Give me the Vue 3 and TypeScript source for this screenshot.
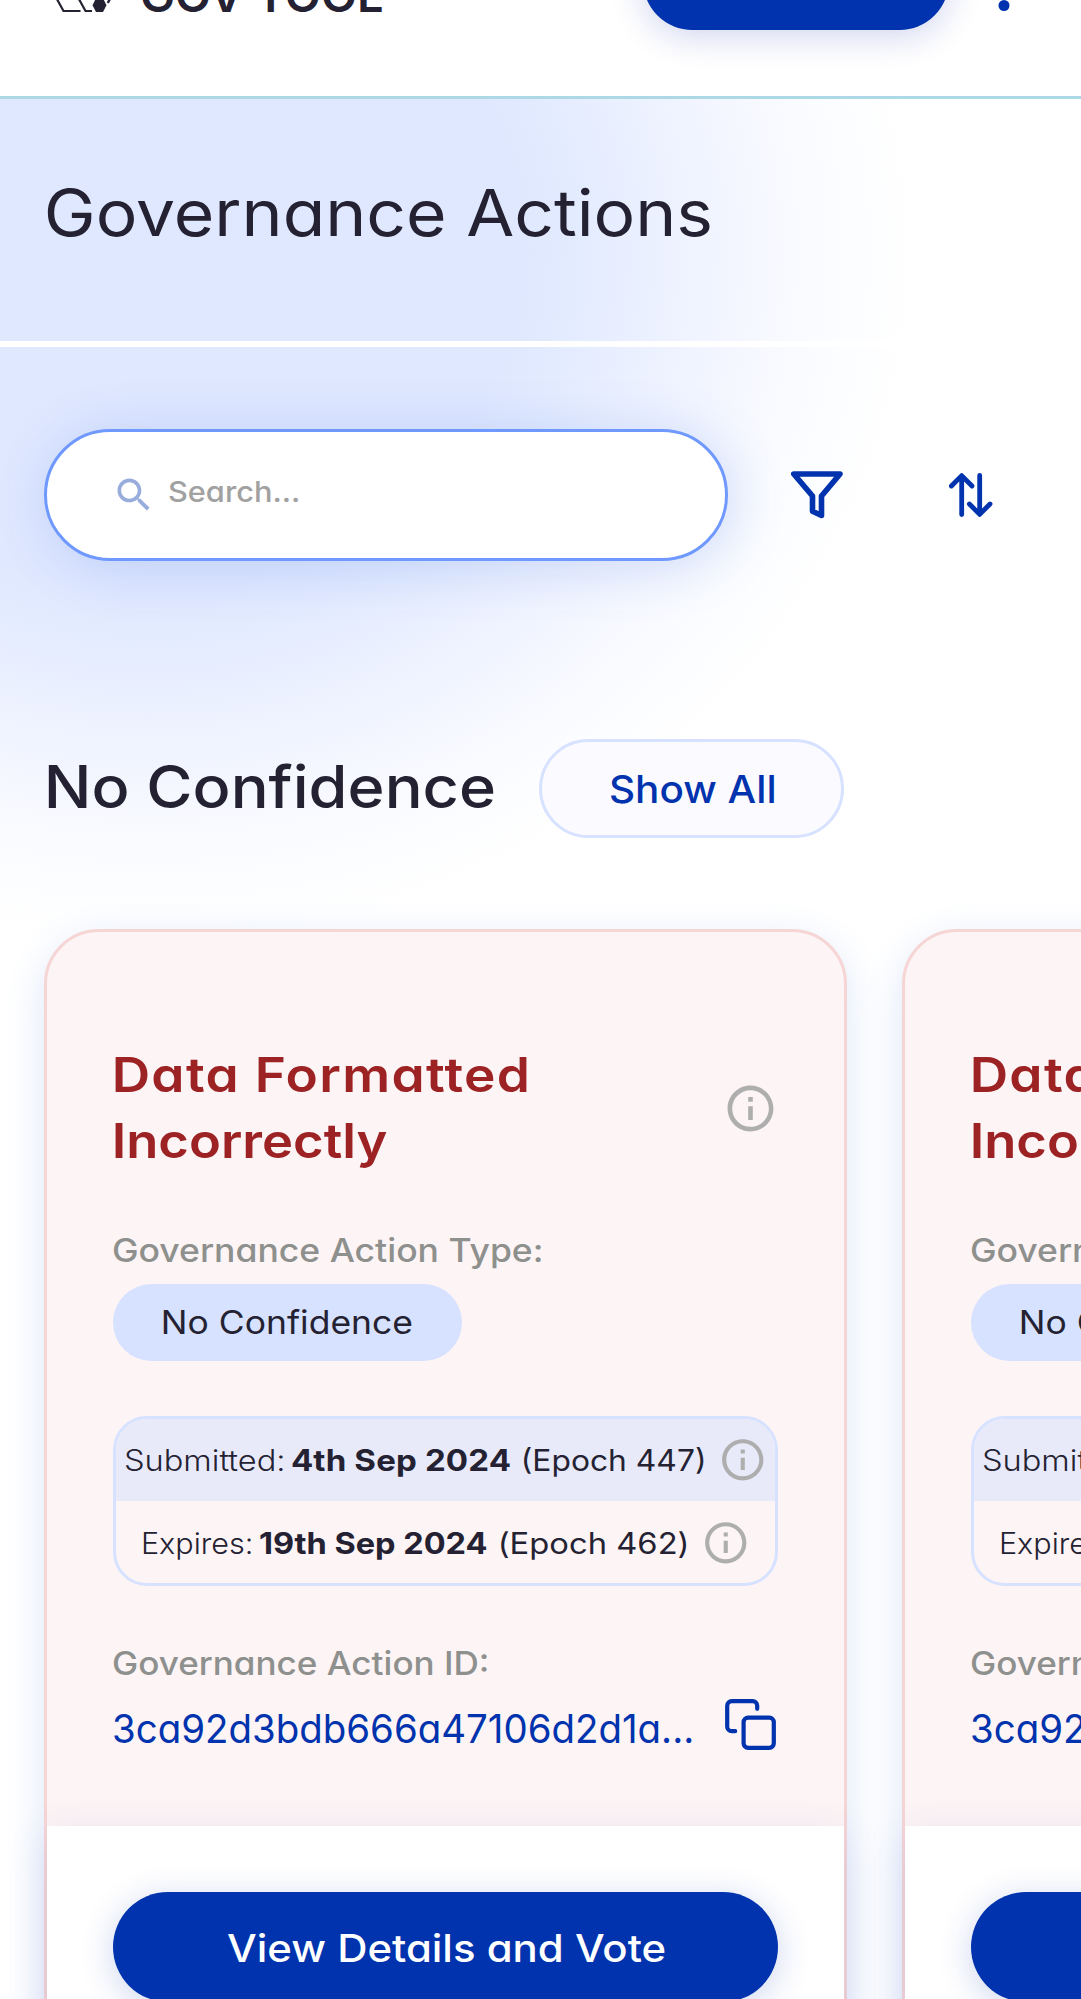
<script setup lang="ts">
import type { Directive } from 'vue'

interface GovernanceAction {
  key: number
  title: [string, string]
  type: string
  submitted: { date: string; epoch: string }
  expires: { date: string; epoch: string }
  id: string
}

const base = {
  title: ['Data Formatted', 'Incorrectly'] as [string, string],
  type: 'No Confidence',
  submitted: { date: '4th Sep 2024', epoch: '(Epoch 447)' },
  expires: { date: '19th Sep 2024', epoch: '(Epoch 462)' },
  id: '3ca92d3bdb666a47106d2d1a...',
}
const actions: GovernanceAction[] = [
  { key: 1, ...base },
  { key: 2, ...base },
]

// Widens a label so that its glyphs span exactly the given width in pixels:
// first by stretching the glyphs a little, then by tracking.
const vSpan: Directive<HTMLElement, number> = {
  mounted(el, binding) {
    const text = (el.textContent ?? '').trim()
    const ctx = document.createElement('canvas').getContext('2d')
    if (!ctx || text.length < 2) return
    const cs = getComputedStyle(el)
    ctx.font = `${cs.fontWeight} ${cs.fontSize} ${cs.fontFamily}`
    const m = ctx.measureText(text)
    const range = document.createRange()
    range.selectNodeContents(el)
    const alternates = range.getBoundingClientRect().width - m.width
    const ink = m.actualBoundingBoxLeft + m.actualBoundingBoxRight + alternates
    const stretch = Math.min(1.12, Math.max(0.95, binding.value / ink))
    el.style.width = `${binding.value}px`
    el.style.letterSpacing = `${(binding.value / stretch - ink) / (text.length - 1)}px`
    el.style.textIndent = `${m.actualBoundingBoxLeft}px`
    el.style.transform = `scaleX(${stretch})`
  },
}

const infoPath =
  'M11 7h2v2h-2zm0 4h2v6h-2zm1-9C6.480 2 2 6.480 2 12s4.480 10 10 10 10-4.480 10-10S17.520 2 12 2m0 18c-4.410 0-8-3.590-8-8s3.590-8 8-8 8 3.590 8 8-3.590 8-8 8'
</script>

<template>
  <div class="page">
    <header class="header">
      <div class="brand">
        <svg class="mark" width="62" height="64" viewBox="54 -50 62 64" fill="none" stroke="#242232" stroke-width="2.200">
          <path d="M80.500 12H63.500L47 -18L63.500 -48H98" />
          <path d="M92 12H85.500L69 -18L80 -40" />
          <path d="M107.800 4L112 -4" stroke-width="2.400" />
          <path d="M96 -.8h7l3.500 7-3.500 6.800h-7l-3.500-6.800z" fill="#242232" stroke="none" />
        </svg>
        <span v-span="240" class="t brand-name">GOV TOOL</span>
      </div>
      <button class="login" aria-label="Connect wallet"></button>
      <svg class="more" width="66" height="66" viewBox="0 0 24 24" fill="#0033ad">
        <circle cx="12" cy="6" r="2" /><circle cx="12" cy="12" r="2" /><circle cx="12" cy="18" r="2" />
      </svg>
    </header>

    <main class="content">
      <div class="title-bar"><h1 v-span="663" class="t">Governance Actions</h1></div>
      <div class="divider"></div>

      <div class="tools">
        <div class="search">
          <svg width="44" height="44" viewBox="0 0 24 24" fill="#99addd">
            <path d="M15.500 14h-.79l-.28-.27C15.410 12.590 16 11.110 16 9.500 16 5.910 13.090 3 9.500 3S3 5.910 3 9.500 5.910 16 9.500 16c1.610 0 3.090-.59 4.230-1.570l.27.280v.79l5 4.990L20.490 19zm-6 0C7.010 14 5 11.990 5 9.500S7.010 5 9.500 5 14 7.010 14 9.500 11.990 14 9.500 14" />
          </svg>
          <span v-span="129.500" class="t placeholder">Search...</span>
        </div>
        <svg class="filter" width="52" height="48" viewBox="0 0 52 48" fill="none" stroke="#0033ad" stroke-width="5.600" stroke-linejoin="round">
          <path d="M2.800 3H49L30.500 25V44.500L21.500 40.300V25Z" />
        </svg>
        <svg class="sort" width="44" height="44" viewBox="0 0 44 44" fill="none" stroke="#0033ad" stroke-width="4.800" stroke-linecap="round" stroke-linejoin="round">
          <path d="M12.700 41.500V2.800M2.400 13L12.700 2.600L23 13" />
          <path d="M30.700 2.500V41.300M20.400 31L30.700 41.400L41 31" />
        </svg>
      </div>

      <div class="section-head">
        <h2 v-span="445.500" class="t">No Confidence</h2>
        <button class="show-all"><span v-span="164" class="t">Show All</span></button>
      </div>

      <div class="cards">
        <article v-for="a in actions" :key="a.key" class="card">
          <div class="card-body">
            <div class="card-title">
              <h3>
                <span v-span="412" class="t">{{ a.title[0] }}</span>
                <span v-span="272.500" class="t">{{ a.title[1] }}</span>
              </h3>
              <svg width="55" height="55" viewBox="0 0 24 24" fill="#adaead"><path :d="infoPath" /></svg>
            </div>

            <div class="label type-label"><span v-span="428.500" class="t">Governance Action Type:</span></div>
            <div class="pill"><span v-span="249" class="t">{{ a.type }}</span></div>

            <div class="dates">
              <div class="date submitted">
                <span v-span="158" class="t light">Submitted:</span>
                <b v-span="218" class="t">{{ a.submitted.date }}</b>
                <span v-span="179.500" class="t">{{ a.submitted.epoch }}</span>
                <svg width="49.500" height="49.500" viewBox="0 0 24 24" fill="#adaead"><path :d="infoPath" /></svg>
              </div>
              <div class="date expires">
                <span v-span="108" class="t light">Expires:</span>
                <b v-span="226.500" class="t">{{ a.expires.date }}</b>
                <span v-span="185.500" class="t">{{ a.expires.epoch }}</span>
                <svg width="49.500" height="49.500" viewBox="0 0 24 24" fill="#adaead"><path :d="infoPath" /></svg>
              </div>
            </div>

            <div class="label id-label"><span v-span="374.500" class="t">Governance Action ID:</span></div>
            <div class="id-row">
              <span v-span="578" class="t">{{ a.id }}</span>
              <svg width="51" height="51" viewBox="0 0 51 51" fill="none" stroke="#0033ad" stroke-width="4.200" stroke-linecap="round" stroke-linejoin="round">
                <rect x="18.600" y="18.600" width="30.200" height="30.200" rx="4.500" />
                <path d="M10.200 32.200H6.700A4.500 4.500 0 0 1 2.200 27.700V6.700A4.500 4.500 0 0 1 6.700 2.200H27.700A4.500 4.500 0 0 1 32.200 6.700V9.800" />
              </svg>
            </div>
          </div>
          <div class="card-foot">
            <button class="vote"><span v-span="438" class="t">View Details and Vote</span></button>
          </div>
        </article>
      </div>
    </main>
  </div>
</template>

<style>
body {
  margin: 0;
  background: #fff;
}
</style>

<style scoped>
.page {
  box-sizing: border-box;
  width: 1081px;
  height: 1999px;
  overflow: hidden;
  display: flex;
  flex-direction: column;
  background: #fff;
  color: #242232;
  font-family: Inter, 'Open Sans', sans-serif;
  font-feature-settings: 'cv11' 1;
}
.page * {
  box-sizing: border-box;
}
.t {
  display: block;
  flex: none;
  text-align: left;
  white-space: nowrap;
  transform-origin: left center;
}
h1, h2, h3 {
  margin: 0;
}
button {
  padding: 0;
  border: 0;
  font: inherit;
  font-feature-settings: inherit;
}
.header {
  flex: none;
  height: 237px;
  margin-top: -138px;
  display: flex;
  align-items: center;
  border-bottom: 3px solid #add8e6;
}
.brand {
  display: flex;
  align-items: center;
  margin-left: 54px;
  padding-top: 33px;
}
.mark {
  margin-top: -29px;
}
.brand-name {
  margin-left: 26px;
  font-size: 45px;
  font-weight: 600;
  line-height: 60px;
}
.login {
  width: 306px;
  height: 99px;
  margin: 2px 0 0 260.500px;
  border-radius: 50px;
  background: #0033ad;
  box-shadow: 0 6px 34px rgba(20, 40, 170, 0.2);
}
.more {
  margin: 19px 0 0 22px;
}
.content {
  flex: 1;
  min-height: 0;
  background: radial-gradient(
    ellipse 775px 700px at 150px 151px,
    #e0e8ff 0%, #e0e8ff 48%, #e3ebff 55%, #ecf1ff 66%, #f6f8ff 79%, #fcfdff 90%, #fff 100%
  ) no-repeat;
}
.title-bar {
  height: 242px;
  padding: 79.500px 0 0 46.500px;
}
h1 {
  font-size: 64px;
  font-weight: 400;
  line-height: 67px;
}
.divider {
  height: 5.500px;
  background: #fff;
}
.tools {
  display: flex;
  align-items: center;
  margin: 82px 0 0 44px;
}
.search {
  display: flex;
  align-items: center;
  width: 684px;
  height: 132px;
  padding-left: 65px;
  border: 3px solid #6f99ff;
  border-radius: 66px;
  background: #fff;
  box-shadow: 5.500px 5.500px 55px rgba(47, 98, 220, 0.2);
}
.placeholder {
  margin: -6px 0 0 12.500px;
  color: #a1a1a1;
  font-size: 29px;
  font-weight: 500;
}
.filter {
  margin-left: 62.500px;
}
.sort {
  margin-left: 106.500px;
}
.section-head {
  display: flex;
  align-items: center;
  margin: 178.500px 0 0 48px;
}
h2 {
  margin-top: -4px;
  font-size: 58.500px;
  font-weight: 500;
  line-height: 70px;
}
.show-all {
  display: flex;
  align-items: center;
  justify-content: center;
  width: 305px;
  height: 99px;
  margin-left: 45.500px;
  border: 3px solid #d6e2ff;
  border-radius: 50px;
  background: #fbfbff;
  color: #0033ad;
  font-size: 37.500px;
  font-weight: 500;
}
.show-all .t {
  margin-top: 1px;
}
.cards {
  display: flex;
  gap: 55px;
  margin: 91px 0 0 44px;
}
.card {
  flex: none;
  width: 803px;
  height: 1180px;
  border: 3px solid #f6d5d5;
  border-radius: 55px;
  background: #fdf4f5;
  box-shadow: 0 11px 41px #dde6f7;
}
.card-body {
  height: 894px;
  padding: 110px 66px 0;
}
.card-title {
  display: flex;
  align-items: center;
  justify-content: space-between;
}
h3 {
  padding-left: 1.500px;
  color: #9c2224;
  font-size: 47.500px;
  font-weight: 600;
  line-height: 66px;
}
.label {
  height: 50px;
  color: #8e908e;
  font-size: 32.500px;
  font-weight: 500;
  line-height: 51px;
}
.type-label {
  margin-top: 50.500px;
}
.pill {
  display: flex;
  align-items: center;
  justify-content: center;
  width: 349px;
  height: 77px;
  margin-top: 9px;
  border-radius: 39px;
  background: #d6e2ff;
  font-size: 32.500px;
}
.dates {
  height: 170.700px;
  margin-top: 55.300px;
  overflow: hidden;
  border: 3px solid #d6e2ff;
  border-radius: 34px;
}
.date {
  display: flex;
  align-items: center;
  height: 82.600px;
  font-size: 29.500px;
}
.date b {
  margin: 0 14px 0 9.500px;
  font-weight: 700;
}
.date svg {
  margin-left: 14px;
}
.light {
  font-weight: 300;
}
.submitted {
  padding-left: 8.500px;
  background: #e8eafa;
}
.expires {
  padding-left: 26.500px;
}
.expires svg {
  margin-left: 15px;
}
.id-label {
  margin-top: 51.300px;
}
.id-row {
  display: flex;
  align-items: center;
  justify-content: space-between;
  height: 55px;
  margin-top: 9px;
  padding: 0 2px 0 1px;
  color: #0033ad;
  font-size: 39.500px;
}
.id-row .t {
  padding-top: 10px;
}
.card-foot {
  height: 280px;
  padding: 66px;
  border-radius: 0 0 52px 52px;
  background: #fff;
  box-shadow: 0 11px 41px rgba(60, 70, 200, 0.14);
}
.vote {
  display: flex;
  align-items: center;
  justify-content: center;
  width: 100%;
  height: 110px;
  padding-top: 2px;
  border-radius: 55px;
  background: #0033ad;
  box-shadow: 0 6px 34px rgba(0, 51, 173, 0.2);
  color: #fff;
  font-size: 37.500px;
  font-weight: 500;
}
</style>
